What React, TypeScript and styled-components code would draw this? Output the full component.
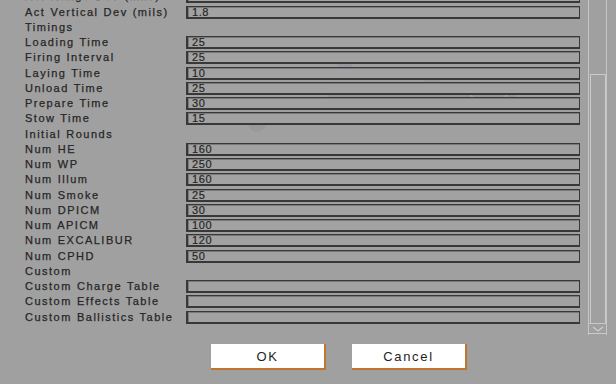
import React from "react";
import styled, { createGlobalStyle } from "styled-components";

const Global = createGlobalStyle`
  html, body { margin: 0; padding: 0; background: #a0a0a0; }
  body { width: 616px; height: 384px; overflow: hidden; }
  * { box-sizing: border-box; }
`;

const Page = styled.div`
  position: relative;
  width: 616px;
  height: 384px;
  background: #a0a0a0;
  font-family: "Liberation Sans", Arial, sans-serif;
  color: #262626;
  display: flex;
  flex-direction: column;
  overflow: hidden;
`;

const Ghost = styled.div`
  position: absolute;
  inset: 0;
  pointer-events: none;
`;

const GhostTitle = styled.div`
  position: absolute;
  left: 327px;
  top: 82px;
  width: 188px;
  height: 15px;
  background: rgba(0, 0, 0, 0.05);
  color: rgba(255, 255, 255, 0.2);
  font-size: 13px;
  font-weight: bold;
  letter-spacing: 1px;
  line-height: 15px;
  padding-left: 3px;
  white-space: nowrap;
`;

const GhostDot = styled.div<{ $x: number; $y: number }>`
  position: absolute;
  left: ${(p) => p.$x - 9}px;
  top: ${(p) => p.$y - 9}px;
  width: 18px;
  height: 18px;
  border-radius: 50%;
  background: rgba(90, 90, 150, 0.1);
`;

const Body = styled.div`
  position: relative;
  display: flex;
  height: 335px;
`;

const ScrollView = styled.div`
  width: 588px;
  height: 335px;
  overflow: hidden;
`;

const List = styled.div`
  margin-top: -10.8px;
  display: flex;
  flex-direction: column;
`;

const Row = styled.div`
  height: 15.25px;
  display: grid;
  grid-template-columns: 186px 394px;
  align-items: center;
`;

const Label = styled.div`
  padding-left: 25px;
  font-size: 11px;
  letter-spacing: 1.5px;
  word-spacing: 0.5px;
  white-space: nowrap;
  line-height: 13px;
  -webkit-text-stroke: 0.25px #262626;
`;

const Field = styled.div`
  height: 13px;
  border: 1px solid #383838;
  border-bottom-width: 2px;
  border-left-width: 2px;
  background: #a2a2a2;
  box-shadow: inset 1px 1px 0 #7a7a7a;
  font-size: 11px;
  letter-spacing: 0.6px;
  line-height: 10px;
  padding-left: 4px;
  color: #262626;
  white-space: nowrap;
  -webkit-text-stroke: 0.2px #262626;
`;

const ScrollBar = styled.div`
  width: 19px;
  height: 335px;
  border-left: 1.5px solid #c6c6c6;
  border-right: 1.5px solid #c6c6c6;
  display: flex;
  flex-direction: column;
  align-items: center;
`;

const Thumb = styled.div`
  margin-top: 74px;
  width: 16px;
  height: 249px;
  border: 1px solid #cacaca;
  border-bottom: none;
`;

const ArrowBtn = styled.div`
  width: 100%;
  height: 11px;
  border-top: 1.5px solid #cacaca;
  border-bottom: 1.5px solid #cacaca;
  display: flex;
  align-items: center;
  justify-content: center;
`;

const ButtonBar = styled.div`
  display: flex;
  gap: 26px;
  padding-left: 211px;
  padding-top: 9px;
`;

const Button = styled.button`
  width: 115px;
  height: 26px;
  background: #ffffff;
  border: none;
  border-right: 2.5px solid #c0742e;
  border-bottom: 2.5px solid #c0742e;
  padding: 0;
  font-family: "Liberation Sans", Arial, sans-serif;
  font-size: 13px;
  letter-spacing: 1.7px;
  color: #1e1e1e;
  display: flex;
  align-items: center;
  justify-content: center;
`;

type Item = { label: string; value?: string };

const items: Item[] = [
  { label: "Act Range Dev (mils)", value: "" },
  { label: "Act Vertical Dev (mils)", value: "1.8" },
  { label: "Timings" },
  { label: "Loading Time", value: "25" },
  { label: "Firing Interval", value: "25" },
  { label: "Laying Time", value: "10" },
  { label: "Unload Time", value: "25" },
  { label: "Prepare Time", value: "30" },
  { label: "Stow Time", value: "15" },
  { label: "Initial Rounds" },
  { label: "Num HE", value: "160" },
  { label: "Num WP", value: "250" },
  { label: "Num Illum", value: "160" },
  { label: "Num Smoke", value: "25" },
  { label: "Num DPICM", value: "30" },
  { label: "Num APICM", value: "100" },
  { label: "Num EXCALIBUR", value: "120" },
  { label: "Num CPHD", value: "50" },
  { label: "Custom" },
  { label: "Custom Charge Table", value: "" },
  { label: "Custom Effects Table", value: "" },
  { label: "Custom Ballistics Table", value: "" },
];

export default function App() {
  return (
    <Page>
      <Global />
      <Ghost>
        <GhostDot $x={345} $y={60} />
        <GhostDot $x={432} $y={76} />
        <GhostDot $x={257} $y={123} />
        <GhostTitle>VBS2Fires Gunline (How)</GhostTitle>
      </Ghost>
      <Body>
        <ScrollView>
          <List>
            {items.map((it, i) => (
              <Row key={i}>
                <Label>{it.label}</Label>
                {it.value !== undefined ? <Field>{it.value}</Field> : <span />}
              </Row>
            ))}
          </List>
        </ScrollView>
        <ScrollBar>
          <Thumb />
          <ArrowBtn>
            <svg width="12" height="6" viewBox="0 0 12 6">
              <path d="M1 1 L6 5 L11 1" fill="none" stroke="#cfcfcf" strokeWidth="1.2" />
            </svg>
          </ArrowBtn>
        </ScrollBar>
      </Body>
      <ButtonBar>
        <Button>OK</Button>
        <Button>Cancel</Button>
      </ButtonBar>
    </Page>
  );
}
